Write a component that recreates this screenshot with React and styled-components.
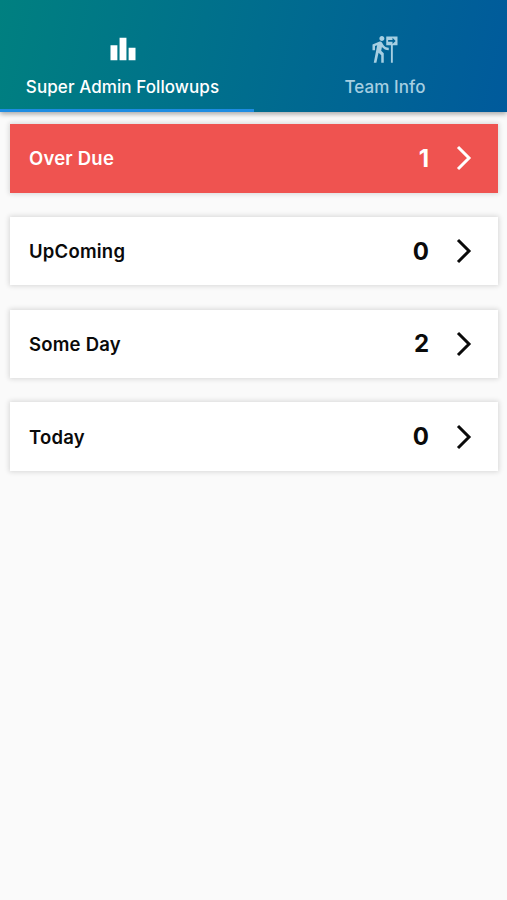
import React, { useState } from 'react';
import styled, { createGlobalStyle } from 'styled-components';
import { MdLeaderboard, MdFollowTheSigns } from 'react-icons/md';

const GlobalStyle = createGlobalStyle`
  body {
    margin: 0;
    background: #fafafa;
    font-family: Inter, Roboto, sans-serif;
  }
`;

const Page = styled.div`
  min-height: 100vh;
  background: #fafafa;
`;

const TabBar = styled.div`
  display: grid;
  grid-template-columns: 254px 1fr;
  height: 112px;
  background: linear-gradient(102.5deg, #008080, #005a9c);
  box-shadow: 0 2px 5px rgba(0, 0, 0, 0.35);
`;

const Tab = styled.button`
  display: flex;
  flex-direction: column;
  align-items: center;
  box-sizing: border-box;
  padding: 34px 9px 0 0;
  border: 0;
  border-bottom: 3px solid ${(props) => (props.$active ? '#1e8ce2' : 'transparent')};
  background: none;
  color: ${(props) => (props.$active ? '#fff' : '#a6cfe2')};
  font-family: inherit;

  &:last-child {
    padding: 34px 0 0 9px;
  }

  svg {
    display: block;
  }
`;

const TabText = styled.span`
  margin-top: 12px;
  font-size: 17px;
  font-weight: 500;
  line-height: 22px;
  letter-spacing: 0.08px;
  white-space: nowrap;
`;

const List = styled.div`
  display: flex;
  flex-direction: column;
  gap: 24.3px;
  padding: 12px 9px 0 9.5px;
`;

const Card = styled.div`
  display: flex;
  align-items: center;
  box-sizing: border-box;
  height: 68.5px;
  padding: 0 26px 0 19.5px;
  background: ${(props) => (props.$overdue ? '#ef5350' : '#fff')};
  color: ${(props) => (props.$overdue ? '#fff' : '#0a0a0a')};
  box-shadow: 0 0 5px 1px rgba(0, 0, 0, 0.14);
`;

const CardTitle = styled.span`
  flex: 1;
  font-size: 18.5px;
  font-weight: 600;
  letter-spacing: 0.22px;
`;

const Count = styled.span`
  margin-right: 27px;
  font-size: 24px;
  font-weight: 700;
`;

const Arrow = styled.svg`
  display: block;
  width: 16px;
  height: 26px;
  fill: none;
  stroke: currentColor;
  stroke-width: 3;
`;

const tabs = [
  { title: 'Super Admin Followups', Icon: MdLeaderboard },
  { title: 'Team Info', Icon: MdFollowTheSigns },
];

const followups = [
  { title: 'Over Due', count: 1, overdue: true },
  { title: 'UpComing', count: 0 },
  { title: 'Some Day', count: 2 },
  { title: 'Today', count: 0 },
];

const FollowupCard = (props) => (
  <Card $overdue={props.overdue}>
    <CardTitle>{props.title}</CardTitle>
    <Count>{props.count}</Count>
    <Arrow viewBox="0 0 16 26">
      <path d="M2 2 L13 13 L2 24" />
    </Arrow>
  </Card>
);

const App = () => {
  const [active, setActive] = useState(0);

  return (
    <Page>
      <GlobalStyle />
      <TabBar>
        {tabs.map(({ title, Icon }, index) => (
          <Tab key={title} $active={index === active} onClick={() => setActive(index)}>
            <Icon size={30} />
            <TabText>{title}</TabText>
          </Tab>
        ))}
      </TabBar>
      <List>
        {followups.map((item) => (
          <FollowupCard key={item.title} {...item} />
        ))}
      </List>
    </Page>
  );
};

export default App;
